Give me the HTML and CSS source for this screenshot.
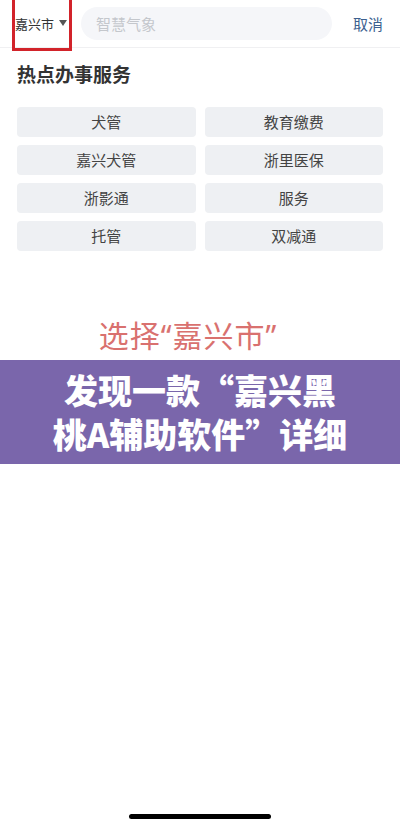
FILE: index.html
```html
<!DOCTYPE html>
<html lang="zh-CN">
  <head>
    <meta charset="UTF-8" />
    <meta name="viewport" content="width=device-width, initial-scale=1.0" />
    <title>热点办事服务</title>
    <link rel="stylesheet" href="styles.css">
  </head>
  <body>
    <div class="page">
      <div class="top-bar">
        <div class="city">
          <span>嘉兴市</span>
          <span class="arrow"></span>
          <div class="highlight"></div>
        </div>
        <div class="search">智慧气象</div>
        <div class="cancel">取消</div>
      </div>

      <h2 class="section-title">热点办事服务</h2>
      <ul class="services">
        <li>犬管</li>
        <li>教育缴费</li>
        <li>嘉兴犬管</li>
        <li>浙里医保</li>
        <li>浙影通</li>
        <li>服务</li>
        <li>托管</li>
        <li>双减通</li>
      </ul>

      <div class="hint">选择“嘉兴市”</div>

      <div class="banner">
        <p>发现一款“嘉兴黑</p>
        <p>桃A辅助软件”详细</p>
      </div>

      <div class="home-bar"></div>
    </div>
  </body>
</html>
```

FILE: styles.css
```css
* {
  margin: 0;
  padding: 0;
  box-sizing: border-box;
}

body {
  font-family: "Noto Sans CJK SC", "Noto Sans", sans-serif;
  background-color: #fff;
  color: #333;
}

.page {
  display: flex;
  flex-direction: column;
  height: 100vh;
}

.top-bar {
  display: flex;
  align-items: center;
  height: 48px;
  padding: 0 17px 1px 15px;
  border-bottom: 1px solid #f0f0f2;
}

.city {
  position: relative;
  align-self: stretch;
  display: flex;
  align-items: center;
  font-size: 13px;
  color: #333;
  width: 66px;
}

.city .arrow {
  margin-left: 5px;
  border-left: 4px solid transparent;
  border-right: 4px solid transparent;
  border-top: 6px solid #555;
}

.highlight {
  position: absolute;
  left: -3px;
  top: 0;
  bottom: -5px;
  width: 60px;
  border: 3px solid #d2232a;
  border-top: none;
}

.search {
  flex: 1;
  height: 33px;
  margin-top: 1px;
  border-radius: 17px;
  background-color: #f5f6f9;
  color: #c4c7cc;
  font-size: 15px;
  line-height: 33px;
  padding-left: 15px;
}

.cancel {
  margin-left: 21px;
  font-size: 15px;
  color: #3d5f8f;
}

.section-title {
  font-size: 19px;
  font-weight: 700;
  line-height: 26px;
  padding: 13px 17px 0;
  color: #333;
}

.services {
  list-style-type: none;
  display: grid;
  grid-template-columns: 1fr 1fr;
  gap: 8px 9px;
  padding: 0 17px;
  margin-top: 20px;
}

.services li {
  height: 30px;
  line-height: 30px;
  text-align: center;
  font-size: 15px;
  color: #444;
  background-color: #eef0f3;
  border-radius: 4px;
}

.hint {
  margin-top: 66px;
  text-align: center;
  padding-right: 24px;
  font-family: "Noto Sans", "Noto Sans CJK SC", sans-serif;
  font-size: 30px;
  letter-spacing: 1px;
  line-height: 38px;
  color: #d9716f;
}

.banner {
  margin-top: 5px;
  height: 104px;
  padding: 8px 0;
  background-color: #7a66ab;
  color: #fff;
  text-align: center;
  font-size: 34px;
  font-weight: 900;
  line-height: 44px;
}

.banner p {
  height: 44px;
}

.home-bar {
  margin: auto auto 8px;
  width: 142px;
  height: 5px;
  border-radius: 3px;
  background-color: #000;
}
```
